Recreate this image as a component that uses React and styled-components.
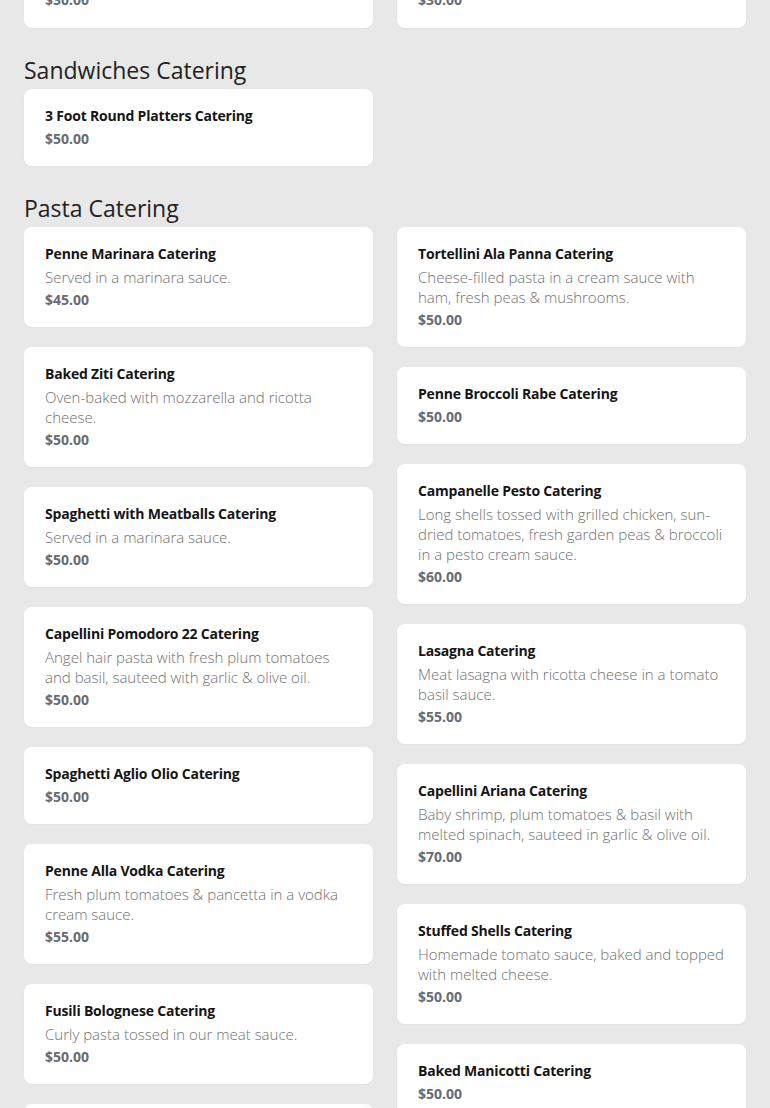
import React from "react";
import styled, { createGlobalStyle } from "styled-components";

const GlobalStyle = createGlobalStyle`
  html, body {
    margin: 0;
    padding: 0;
    background: #e8e8e8;
  }
  body {
    font-family: "Open Sans", "Noto Sans", Arial, sans-serif;
  }
`;

const Page = styled.div`
  padding: 0 24px 24px;
  overflow: hidden;
`;

const Section = styled.section`
  margin-top: ${(p) => (p.$first ? "-10px" : "27px")};
`;

const Heading = styled.h2`
  margin: 0 0 4px;
  font-size: 23px;
  line-height: 30px;
  font-weight: 400;
  color: #222;
`;

const Columns = styled.div`
  display: flex;
  gap: 24px;
  align-items: flex-start;
`;

const Column = styled.div`
  flex: 1 1 0;
  min-width: 0;
  display: flex;
  flex-direction: column;
  gap: 20px;
`;

const Card = styled.div`
  background: #fff;
  border-radius: 8px;
  padding: ${(p) => (p.$stub ? "0 21px 18px" : "17px 21px 17px")};
  box-shadow: 0 1px 2px rgba(0, 0, 0, 0.03);
`;

const Title = styled.div`
  font-size: 14px;
  line-height: 20px;
  font-weight: 700;
  letter-spacing: -0.2px;
  color: #151515;
`;

const Desc = styled.div`
  margin-top: 3px;
  font-size: 15px;
  line-height: 20px;
  font-weight: 300;
  color: #6f6f6f;
`;

const Price = styled.div`
  margin-top: ${(p) => (p.$stub ? "0" : "3px")};
  font-size: 14px;
  line-height: 20px;
  font-weight: 700;
  color: #656c73;
`;

const Item = ({ title, desc, price }) => (
  <Card>
    <Title>{title}</Title>
    {desc && <Desc>{desc}</Desc>}
    <Price>{price}</Price>
  </Card>
);

const pastaLeft = [
  { title: "Penne Marinara Catering", desc: "Served in a marinara sauce.", price: "$45.00" },
  { title: "Baked Ziti Catering", desc: "Oven-baked with mozzarella and ricotta cheese.", price: "$50.00" },
  { title: "Spaghetti with Meatballs Catering", desc: "Served in a marinara sauce.", price: "$50.00" },
  {
    title: "Capellini Pomodoro 22 Catering",
    desc: "Angel hair pasta with fresh plum tomatoes and basil, sauteed with garlic & olive oil.",
    price: "$50.00",
  },
  { title: "Spaghetti Aglio Olio Catering", price: "$50.00" },
  { title: "Penne Alla Vodka Catering", desc: "Fresh plum tomatoes & pancetta in a vodka cream sauce.", price: "$55.00" },
  { title: "Fusili Bolognese Catering", desc: "Curly pasta tossed in our meat sauce.", price: "$50.00" },
  { title: "Cheese Ravioli Catering", desc: "Served in a marinara sauce.", price: "$50.00" },
];

const pastaRight = [
  {
    title: "Tortellini Ala Panna Catering",
    desc: "Cheese-filled pasta in a cream sauce with ham, fresh peas & mushrooms.",
    price: "$50.00",
  },
  { title: "Penne Broccoli Rabe Catering", price: "$50.00" },
  {
    title: "Campanelle Pesto Catering",
    desc: "Long shells tossed with grilled chicken, sun-dried tomatoes, fresh garden peas & broccoli in a pesto cream sauce.",
    price: "$60.00",
  },
  { title: "Lasagna Catering", desc: "Meat lasagna with ricotta cheese in a tomato basil sauce.", price: "$55.00" },
  {
    title: "Capellini Ariana Catering",
    desc: "Baby shrimp, plum tomatoes & basil with melted spinach, sauteed in garlic & olive oil.",
    price: "$70.00",
  },
  {
    title: "Stuffed Shells Catering",
    desc: "Homemade tomato sauce, baked and topped with melted cheese.",
    price: "$50.00",
  },
  { title: "Baked Manicotti Catering", price: "$50.00" },
];

export default function App() {
  return (
    <>
      <GlobalStyle />
      <Page>
        <Section $first>
          <Columns>
            <Column>
              <Card $stub>
                <Price $stub>$30.00</Price>
              </Card>
            </Column>
            <Column>
              <Card $stub>
                <Price $stub>$30.00</Price>
              </Card>
            </Column>
          </Columns>
        </Section>

        <Section>
          <Heading>Sandwiches Catering</Heading>
          <Columns>
            <Column>
              <Item title="3 Foot Round Platters Catering" price="$50.00" />
            </Column>
            <Column />
          </Columns>
        </Section>

        <Section>
          <Heading>Pasta Catering</Heading>
          <Columns>
            <Column>
              {pastaLeft.map((it) => (
                <Item key={it.title} {...it} />
              ))}
            </Column>
            <Column>
              {pastaRight.map((it) => (
                <Item key={it.title} {...it} />
              ))}
            </Column>
          </Columns>
        </Section>
      </Page>
    </>
  );
}
